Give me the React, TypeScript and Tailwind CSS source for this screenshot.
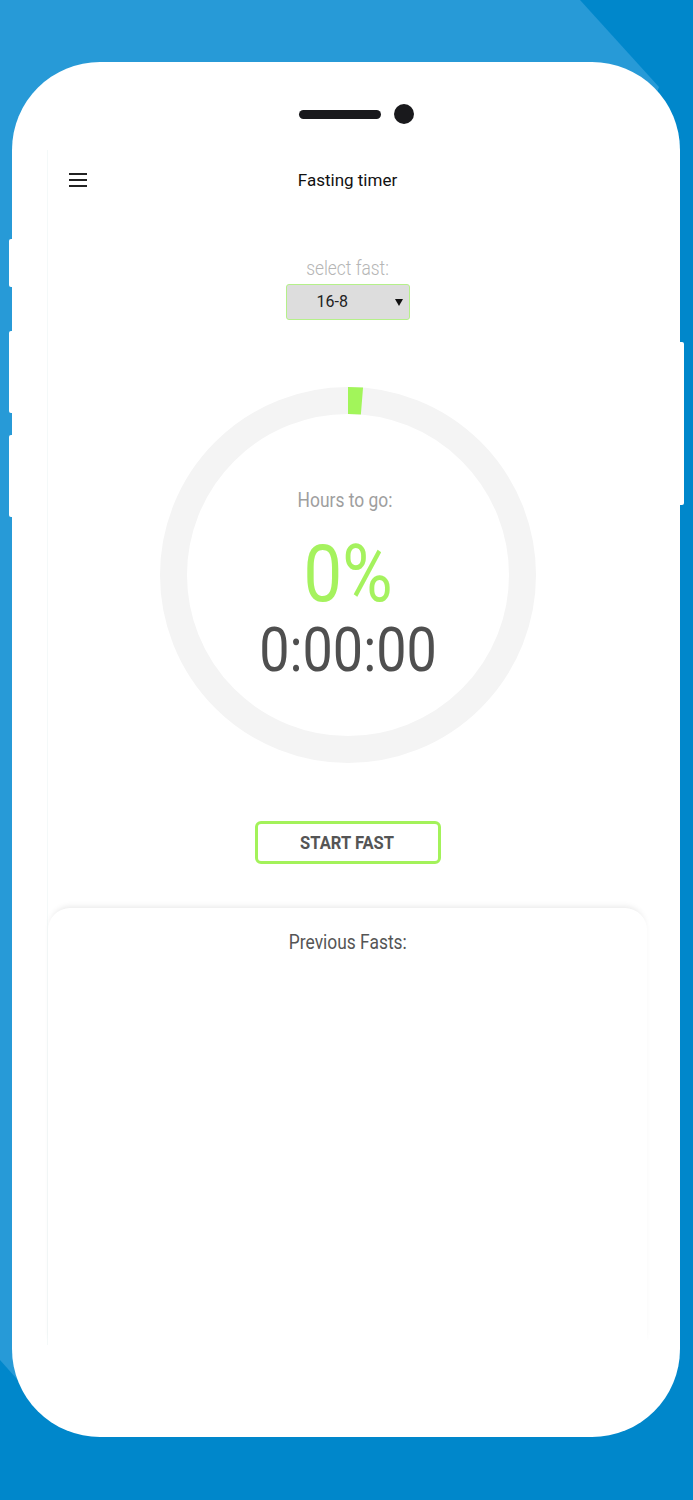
export default function App() {
  return (
    <div className="relative w-[693px] h-[1500px] overflow-hidden bg-[#0087cb] pt-[62px] pl-[12px] [font-family:Roboto,'Liberation_Sans',sans-serif]">
      {/* lighter blue slab behind the phone */}
      <div className="absolute inset-0 bg-[#279ad7] [clip-path:polygon(0_0,580px_0,659px_87px,400px_800px,40px_1405px,0_1360px)]" />

      <div className="relative w-[668px] h-[1375px] rounded-[88px] bg-white flex flex-col">
        {/* side buttons */}
        <div className="absolute -left-[3px] top-[177px] w-[4px] h-[48px] rounded-l-[2px] bg-white" />
        <div className="absolute -left-[3px] top-[269px] w-[4px] h-[82px] rounded-l-[2px] bg-white" />
        <div className="absolute -left-[3px] top-[373px] w-[4px] h-[82px] rounded-l-[2px] bg-white" />
        <div className="absolute -right-[4px] top-[280px] w-[5px] h-[163px] rounded-r-[2px] bg-white" />

        {/* speaker + camera */}
        <div className="flex items-center justify-center gap-[13px] pt-[42px] pl-[21px] h-[62px]">
          <div className="w-[82px] h-[9px] rounded-full bg-[#19191c]" />
          <div className="w-[20px] h-[20px] rounded-full bg-[#19191c]" />
        </div>

        {/* screen */}
        <div className="mt-[26px] ml-[35px] w-[600px] h-[1195px] border-l border-[#f4f9f9] flex flex-col items-center">
          <div className="w-full h-[60px] grid grid-cols-[60px_1fr_60px] items-center">
            <div className="pl-[21px] flex flex-col gap-[4px]">
              <div className="w-[18px] h-[2px] bg-[#222]" />
              <div className="w-[18px] h-[2px] bg-[#222]" />
              <div className="w-[18px] h-[2px] bg-[#222]" />
            </div>
            <div className="text-center text-[17px] leading-[22px] text-[#111]">Fasting timer</div>
            <div />
          </div>

          <div className="mt-[47px] w-full text-center text-[20px] leading-[22px] font-light text-[#b5b5b5] scale-x-87">
            select fast:
          </div>

          <div className="mt-[5px] w-[124px] h-[36px] bg-[#dddddd] border border-[#b5f08a] rounded-[3px] flex items-center justify-between pl-[30px] pr-[6px]">
            <span className="text-[16px] text-[#222]">16-8</span>
            <svg width="8" height="8" viewBox="0 0 8 8">
              <polygon points="0,1 8,1 4,8" fill="#111" />
            </svg>
          </div>

          <div className="mt-[67px] relative w-[376px] h-[376px] rounded-full border-[27px] border-[#f4f4f4] flex flex-col items-center pt-[75px]">
            <svg className="absolute -top-[27px] -left-[27px]" width="376" height="376" viewBox="0 0 376 376">
              <circle
                cx="188"
                cy="188"
                r="174.5"
                fill="none"
                stroke="#a2f55a"
                strokeWidth="27"
                strokeDasharray="14 2000"
                transform="rotate(-90 188 188)"
              />
            </svg>
            <div className="w-full text-center text-[20px] leading-[22px] text-[#9e9e9e] scale-x-87 -translate-x-[3px]">
              Hours to go:
            </div>
            <div className="mt-[24px] w-full text-center text-[79px] leading-none text-[#a5f25e] scale-x-87">0%</div>
            <div className="mt-[5px] w-full text-center text-[62px] leading-none text-[#4f4f4f] scale-x-87">0:00:00</div>
          </div>

          <div className="mt-[58px] w-[186px] h-[43px] border-[3px] border-[#a3f25a] rounded-[6px] flex items-center justify-center">
            <span className="inline-block text-[18px] font-bold text-[#555] scale-x-92">START FAST</span>
          </div>

          <div className="mt-[44px] w-full flex-1 rounded-t-[22px] bg-white shadow-[0_-4px_6px_-3px_rgba(0,0,0,0.1)] flex flex-col items-center pt-[22px]">
            <span className="inline-block text-[20px] leading-[24px] text-[#555] scale-x-87">Previous Fasts:</span>
          </div>
        </div>
      </div>
    </div>
  )
}
